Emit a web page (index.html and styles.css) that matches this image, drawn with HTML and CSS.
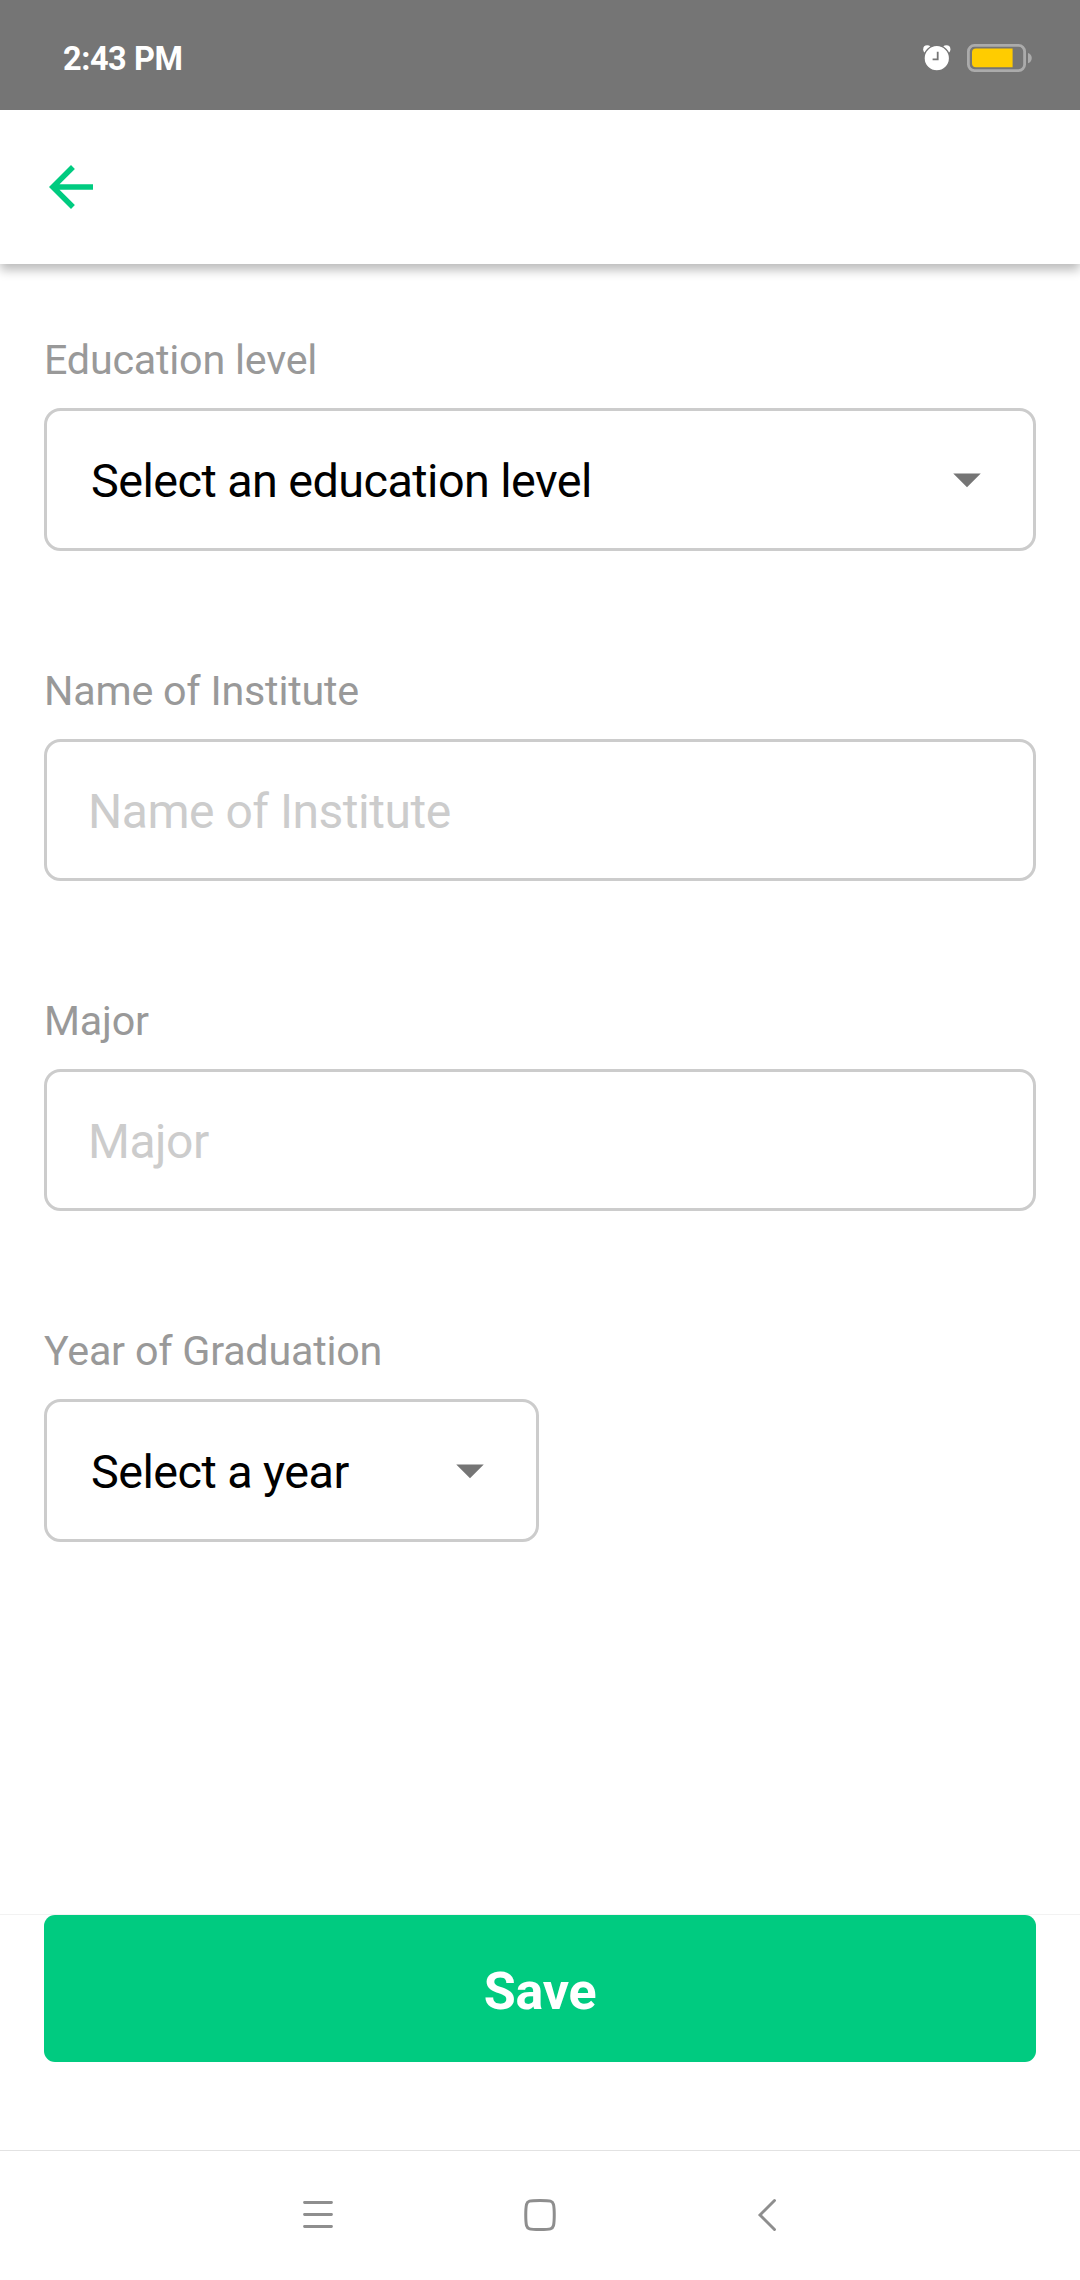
FILE: index.html
```html
<!DOCTYPE html>
<html lang="en">
<head>
<meta charset="utf-8">
<title>Education</title>
<link rel="stylesheet" href="styles.css">
</head>
<body>
<div class="screen">
  <div class="status">
    <span class="time">2:43 PM</span>
    <div class="status-icons">
      <svg class="alarm" width="28" height="26" viewBox="0 0 28 26">
        <circle cx="4.2" cy="4.2" r="4" fill="#fff"/>
        <circle cx="23.4" cy="4.2" r="4" fill="#fff"/>
        <circle cx="13.8" cy="13.2" r="12.8" fill="#fff" stroke="#757575" stroke-width="1.4"/>
        <path d="M14.7 6.8v7.6H9.6" fill="none" stroke="#757575" stroke-width="1.8"/>
      </svg>
      <svg class="battery" width="66" height="28" viewBox="0 0 66 28">
        <rect x="1.4" y="1.4" width="56.2" height="25.2" rx="6" fill="none" stroke="#ababab" stroke-width="2.8"/>
        <path d="M45.6 4.6V23.3H9A4 4 0 0 1 5 19.3V8.6A4 4 0 0 1 9 4.6Z" fill="#ffcc00"/>
        <path d="M61 9c5 1.200 5 9 0 10.200z" fill="#ababab"/>
      </svg>
    </div>
  </div>
  <header class="appbar">
    <svg width="66" height="66" viewBox="0 0 24 24"><path fill="#00cb80" d="M20 11H7.830l5.590-5.590L12 4l-8 8 8 8 1.410-1.410L7.830 13H20v-2z"/></svg>
  </header>
  <main class="form">
    <div class="field">
      <div class="label">Education level</div>
      <div class="box select"><span>Select an education level</span><svg class="caret" width="66" height="66" viewBox="0 0 24 24"><path fill="#757575" d="M7 10l5 5 5-5z"/></svg></div>
    </div>
    <div class="field">
      <div class="label">Name of Institute</div>
      <div class="box input"><span>Name of Institute</span></div>
    </div>
    <div class="field">
      <div class="label">Major</div>
      <div class="box input"><span>Major</span></div>
    </div>
    <div class="field">
      <div class="label">Year of Graduation</div>
      <div class="box select half"><span>Select a year</span><svg class="caret" width="66" height="66" viewBox="0 0 24 24"><path fill="#757575" d="M7 10l5 5 5-5z"/></svg></div>
    </div>
  </main>
  <footer class="actions"><div class="save">Save</div></footer>
  <nav class="nav">
    <svg width="32" height="34" viewBox="0 0 32 34"><path d="M2.500 4.500h27M2.500 16.500h27M2.500 28.500h27" fill="none" stroke="#8e8e8e" stroke-width="2.800" stroke-linecap="round"/></svg>
    <svg width="34" height="34" viewBox="0 0 34 34"><path d="M17 2.500C28 2.500 29.500 3 30.500 6.500C31.500 11 31.500 23 30.500 27.500C29.500 31 28 31.500 17 31.500C6 31.500 4.500 31 3.500 27.500C2.500 23 2.500 11 3.500 6.500C4.500 3 6 2.500 17 2.500Z" fill="none" stroke="#8e8e8e" stroke-width="3"/></svg>
    <svg class="back" width="20" height="34" viewBox="0 0 20 34"><path d="M17.500 2.500L3 17L17.500 31.500" fill="none" stroke="#8e8e8e" stroke-width="2.900" stroke-linecap="round"/></svg>
  </nav>
</div>
</body>
</html>
```
FILE: styles.css
```css
body {
  margin: 0;
  background: #fff;
  font-family: Roboto, sans-serif;
}
.screen {
  display: flex;
  flex-direction: column;
  width: 1080px;
  height: 2280px;
  overflow: hidden;
}
.status {
  display: flex;
  justify-content: space-between;
  align-items: center;
  box-sizing: border-box;
  height: 110px;
  padding: 6px 48px 0 63px;
  background: #757575;
}
.time {
  padding-top: 2px;
  color: #fff;
  font-size: 32.5px;
  font-weight: 700;
  letter-spacing: -0.45px;
  line-height: 40px;
}
.status-icons {
  display: flex;
  align-items: center;
  gap: 16px;
  margin-right: -1px;
}
.appbar {
  box-sizing: border-box;
  height: 154px;
  padding: 44px 38px;
  background: #fff;
  box-shadow: 0 6px 10px rgba(0, 0, 0, 0.27);
  clip-path: inset(0 0 -24px 0);
}
.form {
  display: flex;
  flex: 1;
  flex-direction: column;
  gap: 116px;
  padding: 72px 44px 0;
}
.field {
  display: flex;
  flex-direction: column;
  gap: 24px;
}
.label {
  color: #999;
  font-size: 41.25px;
  letter-spacing: -0.22px;
  line-height: 48px;
}
.box {
  display: flex;
  align-items: center;
  justify-content: space-between;
  box-sizing: border-box;
  border: 3px solid #ccc;
  border-radius: 16.5px;
}
.box span {
  padding-top: 3px;
}
.caret {
  padding-bottom: 2px;
}
.select {
  height: 143px;
  padding: 0 33px 0 44px;
  color: #000;
  font-size: 46.75px;
  letter-spacing: -0.56px;
}
.input {
  height: 142px;
  padding: 0 41px;
  color: #ccc;
  font-size: 48px;
  letter-spacing: -0.48px;
}
.half {
  width: 495px;
}
.actions {
  box-sizing: border-box;
  height: 236px;
  padding: 0 44px;
  border-top: 1px solid #f2f2f2;
}
.save {
  box-sizing: border-box;
  height: 147px;
  padding-top: 6px;
  border-radius: 11px;
  background: #00cb80;
  color: #fff;
  font-size: 52px;
  font-weight: 700;
  letter-spacing: -0.25px;
  line-height: 142px;
  text-align: center;
}
.nav {
  display: grid;
  grid-template-columns: 32px 34px 20px;
  column-gap: 189px;
  align-items: center;
  box-sizing: border-box;
  height: 130px;
  padding: 0 0 1px 302px;
  border-top: 1px solid #e2e2e2;
}
.back {
  margin-left: 11px;
}
```
